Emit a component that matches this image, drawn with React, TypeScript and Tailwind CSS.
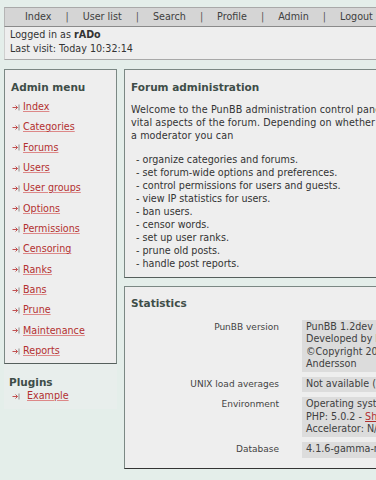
import React from "react";

const font = { fontFamily: '"DejaVu Sans", Verdana, sans-serif' };

function Arrow() {
  return (
    <svg width="8" height="7" viewBox="0 0 8 7" className="shrink-0">
      <path d="M0.5 3.5H5.5M3.5 1.5L5.5 3.5L3.5 5.5" stroke="#c05050" strokeWidth="1" fill="none" />
      <path d="M7 0.5V6.5" stroke="#909090" strokeWidth="1" />
    </svg>
  );
}

const menu = [
  "Index",
  "Categories",
  "Forums",
  "Users",
  "User groups",
  "Options",
  "Permissions",
  "Censoring",
  "Ranks",
  "Bans",
  "Prune",
  "Maintenance",
  "Reports",
];

const nav = ["Index", "User list", "Search", "Profile", "Admin", "Logout"];

const list = [
  "organize categories and forums.",
  "set forum-wide options and preferences.",
  "control permissions for users and guests.",
  "view IP statistics for users.",
  "ban users.",
  "censor words.",
  "set up user ranks.",
  "prune old posts.",
  "handle post reports.",
];

export default function App() {
  return (
    <div className="w-[376px] h-[480px] overflow-hidden bg-[#e4eeea] text-[#333] text-[9.6px]" style={font}>
      <div className="w-[640px] pl-[4px] pt-[7px]">
        <div className="flex items-center h-[20px] bg-[#d5d5d5] border-t border-[#a9a9a9] border-b border-b-[#8a8a8a] border-l border-l-[#b5b5b5] pl-[20px] text-[#404040] whitespace-nowrap">
          {nav.map((n, i) => (
            <React.Fragment key={n}>
              {i > 0 && <span className="mx-[14px] text-[#555]">|</span>}
              <span>{n}</span>
            </React.Fragment>
          ))}
        </div>
        <div className="bg-[#eeeeee] border-b border-[#a8a8a8] border-l border-l-[#cfcfcf] pl-[5px] pt-[1px] pb-[3px] leading-[14px]">
          <div>
            Logged in as <b>rADo</b>
          </div>
          <div>Last visit: Today 10:32:14</div>
        </div>

        <div className="flex mt-[9px] items-start">
          <div className="w-[113px] shrink-0">
            <div className="bg-[#eeeeee] border border-[#7b8884] border-b-[#555f5c] pb-[2px]">
              <div className="pl-[6px] pt-[10px] pb-[3px] font-bold text-[10.5px] text-[#3e4d48] leading-[14px]">
                Admin menu
              </div>
              {menu.map((m) => (
                <div key={m} className="flex items-center h-[20.33px] pl-[7px] gap-[3px]">
                  <Arrow />
                  <span className="text-[#b33030] underline decoration-[#d88]">{m}</span>
                </div>
              ))}
            </div>
            <div className="bg-[#e8eeec] pt-[11px] pb-[6px]">
              <div className="pl-[5px] font-bold text-[10.5px] text-[#3e4d48] leading-[14px]">Plugins</div>
              <div className="flex items-center h-[14px] pl-[8px] gap-[7px]">
                <Arrow />
                <span className="text-[#b33030] underline decoration-[#d88]">Example</span>
              </div>
            </div>
          </div>

          <div className="ml-[7px] flex-1 flex flex-col gap-[8px]">
            <div className="bg-[#eeeeee] border border-[#7b8884] border-b-[#555f5c] pl-[6px] pt-[10px] pb-[7px] whitespace-nowrap">
              <div className="font-bold text-[10.5px] text-[#3e4d48] leading-[14px] mb-[9px]">Forum administration</div>
              <div className="leading-[13px] tracking-[0.1px]">
                Welcome to the PunBB administration control panel. From here you can control
                <br />
                vital aspects of the forum. Depending on whether you are an administrator or
                <br />
                a moderator you can
              </div>
              <div className="leading-[13px] mt-[11px] pl-[5px]">
                {list.map((l) => (
                  <div key={l}>- {l}</div>
                ))}
              </div>
            </div>

            <div className="bg-[#eeeeee] border border-[#7b8884] border-b-[#333] pt-[9px] pb-[10px] whitespace-nowrap">
              <div className="pl-[6px] font-bold text-[10.5px] text-[#3e4d48] leading-[14px] mb-[10px]">Statistics</div>
              <div className="flex flex-col gap-[5px]">
                {[
                  { label: "PunBB version", lines: ["PunBB 1.2dev", "Developed by Rickard Andersson", "©Copyright 2002, 2003, 2004 Rickard", "Andersson"] },
                  { label: "UNIX load averages", lines: ["Not available (Windows)"] },
                  { label: "Environment", lines: ["Operating system: WINNT", "PHP", "Accelerator: N/A"] },
                  { label: "Database", lines: ["4.1.6-gamma-nt"] },
                ].map((r) => (
                  <div key={r.label} className="flex items-start">
                    <div className="w-[154px] shrink-0 text-right text-[#444] pt-[1px] leading-[12.5px] text-[9px]">{r.label}</div>
                    <div className="ml-[23px] flex-1 bg-[#dcdcdc] pl-[4px] pt-[1px] pb-[2px] leading-[12.3px] text-[#404040]">
                      {r.lines.map((ln) =>
                        ln === "PHP" ? (
                          <div key={ln}>
                            PHP: 5.0.2 - <span className="text-[#b33030] underline">Show info</span>
                          </div>
                        ) : (
                          <div key={ln}>{ln}</div>
                        )
                      )}
                    </div>
                  </div>
                ))}
              </div>
            </div>
          </div>
        </div>
      </div>
    </div>
  );
}
